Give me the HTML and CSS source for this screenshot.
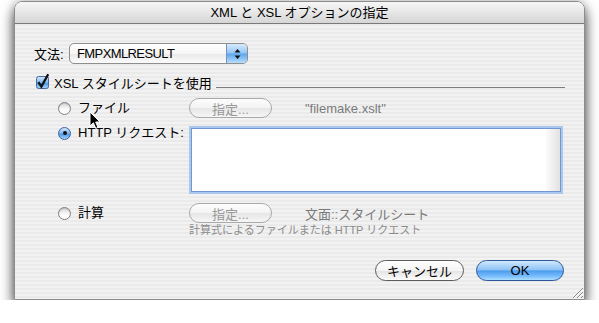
FILE: index.html
```html
<!DOCTYPE html>
<html lang="ja">
<head>
  <meta charset="UTF-8" />
  <title>XML と XSL オプションの指定</title>
  <link rel="stylesheet" href="styles.css">
</head>
<body>

  <!-- Dialog window -->
  <div class="window">
    <div class="titlebar">XML と XSL オプションの指定</div>

    <div class="content">
      <!-- Grammar popup -->
      <div class="grammar">
        <span class="label">文法:</span>
        <div class="popup">
          <span class="popup-text">FMPXMLRESULT</span>
          <span class="popup-arrows">
            <svg width="7" height="12" viewBox="0 0 7 12">
              <path d="M3.5 1 L0.5 4.6 L6.5 4.6 Z M0.5 7.4 L6.5 7.4 L3.5 11 Z" fill="#111"/>
            </svg>
          </span>
        </div>
      </div>

      <!-- XSL group -->
      <div class="group-head">
        <span class="checkbox">
          <svg width="13" height="13" viewBox="0 0 13 13" overflow="visible">
            <defs>
              <linearGradient id="cbFill" x1="0" y1="0" x2="0" y2="1">
                <stop offset="0" stop-color="#d4e8fc"/>
                <stop offset="0.5" stop-color="#7fb8f1"/>
                <stop offset="0.56" stop-color="#4e97e6"/>
                <stop offset="1" stop-color="#a6d6fd"/>
              </linearGradient>
            </defs>
            <rect x="0.5" y="0.5" width="12" height="12" rx="2" fill="url(#cbFill)" stroke="#4a6a9c"/>
            <path d="M2.4 6.2 L5.4 10.6 L12.2 -1.8" fill="none" stroke="#111" stroke-width="2.3"/>
          </svg>
        </span>
        <span class="label">XSL スタイルシートを使用</span>
        <span class="group-line"></span>
      </div>

      <div class="options">
        <div class="opt">
          <div class="opt-label"><span class="radio"></span><span class="txt">ファイル</span></div>
          <div class="opt-field inline">
            <button class="push" disabled>指定...</button>
            <span class="path">"filemake.xslt"</span>
          </div>
        </div>

        <div class="opt">
          <div class="opt-label top"><span class="radio on"></span><span class="txt">HTTP リクエスト:</span></div>
          <div class="opt-field">
            <div class="textarea"><span class="gutter"></span></div>
          </div>
        </div>

        <div class="opt calc">
          <div class="opt-label"><span class="radio"></span><span class="txt">計算</span></div>
          <div class="opt-field">
            <div class="inline">
              <button class="push" disabled>指定...</button>
              <span class="path">文面::スタイルシート</span>
            </div>
            <div class="hint">計算式によるファイルまたは HTTP リクエスト</div>
          </div>
        </div>
      </div>

      <div class="actions">
        <button class="btn cancel">キャンセル</button>
        <button class="btn default">OK</button>
      </div>
    </div>

    <!-- resize grip -->
    <svg class="grip" width="14" height="14" viewBox="0 0 14 14">
      <path d="M13 3 L3 13 M13 7 L7 13 M13 11 L11 13" stroke="#8a8a8a" stroke-width="1"/>
      <path d="M13 4 L4 13 M13 8 L8 13" stroke="#ffffff" stroke-width="1"/>
    </svg>

    <!-- mouse pointer -->
    <svg class="cursor" width="13" height="19" viewBox="0 0 13 19">
      <path d="M1 1 L1 15 L4.4 11.8 L6.8 17.4 L9 16.4 L6.7 11 L11 11 Z" fill="#000" stroke="#fff" stroke-width="1" stroke-linejoin="round"/>
    </svg>
  </div>

</body>
</html>
```

FILE: styles.css
```css
body {
  margin: 0;
  background: #ffffff;
  font-family: "Liberation Sans", "Noto Sans CJK JP", sans-serif;
  font-size: 13px;
  color: #000;
}

/* Window */
.window {
  position: relative;
  width: 571px;
  height: 299px;
  margin: 1px 0 0 14px;
  box-sizing: border-box;
  border: 1px solid #8c8c8c;
  border-radius: 8px 8px 0 0;
  background: repeating-linear-gradient(to bottom, #f2f2f2 0 2px, #eaeaea 2px 4px);
  box-shadow: 0 8px 14px rgba(0, 0, 0, 0.7), 0 0 10px rgba(0, 0, 0, 0.25);
}

.titlebar {
  height: 21px;
  line-height: 21px;
  text-align: center;
  border-bottom: 1px solid #7a7a7a;
  border-radius: 7px 7px 0 0;
  background: linear-gradient(#f7f7f7, #e6e6e6 50%, #d6d6d6);
}

.content {
  padding: 19px 19px 0 19px;
}

/* Grammar row */
.grammar {
  display: flex;
  align-items: center;
  height: 21px;
}

.grammar .label {
  width: 35px;
}

.popup {
  display: flex;
  width: 179px;
  height: 21px;
  box-sizing: border-box;
  border: 1px solid #8e8e8e;
  border-radius: 5px;
  overflow: hidden;
  background: linear-gradient(#ffffff, #f6f6f6 50%, #e9e9e9 52%, #fbfbfb);
}

.popup-text {
  flex: 1;
  padding-left: 7px;
  line-height: 19px;
  letter-spacing: -0.6px;
}

.popup-arrows {
  width: 20px;
  display: flex;
  align-items: center;
  justify-content: center;
  border-left: 1px solid #7391c2;
  background: linear-gradient(#d8ebfd, #92c5f5 48%, #5ba5ee 52%, #b8defd);
}

/* Group header */
.group-head {
  display: flex;
  align-items: center;
  height: 16px;
  margin-top: 10px;
}

.checkbox {
  width: 13px;
  height: 13px;
  margin: 0 5px 0 2px;
}

.checkbox svg {
  display: block;
}

.group-line {
  flex: 1;
  align-self: flex-end;
  margin: 0 0 2px 4px;
  border-bottom: 1px solid #7e7e7e;
}

/* Options */
.options {
  margin-top: 8px;
  padding-left: 24px;
}

.opt {
  display: flex;
}

.opt + .opt {
  margin-top: 8px;
}

.opt.calc {
  margin-top: 9px;
}

.opt-label {
  width: 131px;
  height: 20px;
  display: flex;
  align-items: center;
  flex-shrink: 0;
}

.opt-label.top {
  height: 14px;
}

.opt-label .txt {
  line-height: 14px;
  margin-top: -1px;
}

.radio {
  width: 13px;
  height: 13px;
  box-sizing: border-box;
  margin-right: 7px;
  border-radius: 50%;
  border: 1px solid #7f7f7f;
  background: linear-gradient(#d9d9d9, #fbfbfb 60%, #ffffff);
  box-shadow: inset 0 1px 1px rgba(0, 0, 0, 0.15);
}

.radio.on {
  position: relative;
  border-color: #3f62a0;
  background: linear-gradient(#cfe5fc, #7cb7f1 48%, #4b95e5 54%, #a4d4fd);
  box-shadow: none;
}

.radio.on::after {
  content: "";
  position: absolute;
  left: 3.5px;
  top: 3.5px;
  width: 4px;
  height: 4px;
  border-radius: 50%;
  background: #111;
}

.inline {
  display: flex;
  align-items: center;
}

.push {
  width: 83px;
  height: 20px;
  padding: 0;
  box-sizing: border-box;
  border: 1px solid #a9a9a9;
  border-radius: 10px;
  background: linear-gradient(#fdfdfd, #f3f3f3 50%, #e6e6e6 52%, #f6f6f6);
  font: inherit;
  color: #989898;
}

.path {
  margin-left: 33px;
  color: #7a7a7a;
}

.hint {
  margin-top: 1px;
  font-size: 11px;
  line-height: 13px;
  color: #8c8c8c;
}

.textarea {
  width: 374px;
  height: 68px;
  box-sizing: border-box;
  display: flex;
  justify-content: flex-end;
  border: 2px solid #a9c8ed;
  box-shadow: inset 0 0 0 1px #7397cb;
  background: #ffffff;
}

.gutter {
  width: 14px;
  margin: 1px 1px 1px 0;
  background: linear-gradient(to right, #fbfbfb, #e2e2e2);
}

/* Buttons */
.actions {
  display: flex;
  justify-content: flex-end;
  gap: 12px;
  margin-top: 23px;
  padding-right: 1px;
}

.btn {
  height: 21px;
  padding: 0;
  border-radius: 11px;
  font: inherit;
  color: #000;
}

.btn.cancel {
  width: 89px;
  border: 1px solid #5c5c5c;
  background: linear-gradient(#ffffff, #f4f4f4 50%, #e4e4e4 53%, #fcfcfc);
}

.btn.default {
  width: 88px;
  border: 1px solid #2e579a;
  background: linear-gradient(#d2e8fd, #8fc4f6 45%, #4f9def 53%, #78bdfd 80%, #afdffe);
}

.grip {
  position: absolute;
  right: 0;
  bottom: 0;
}

.cursor {
  position: absolute;
  left: 74px;
  top: 109px;
}
```
